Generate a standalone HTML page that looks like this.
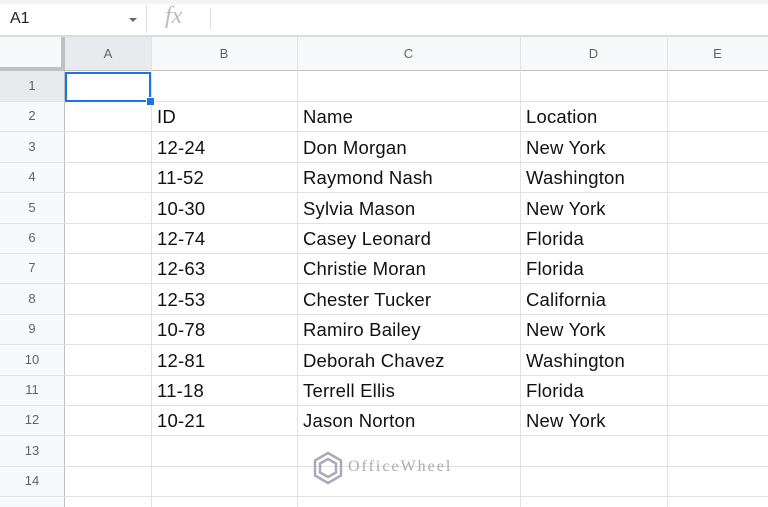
<html style="width:768px;height:507px;overflow:hidden"><head><style>
body{margin:0;width:768px;height:507px;overflow:hidden;background:#fff;font-family:"Liberation Sans",Arial,sans-serif;position:relative}
.a{position:absolute}
.h{background:#f8f9fa;color:#5f6368;font-size:13px;text-align:center;box-sizing:border-box}
.t{font-size:18.5px;letter-spacing:0.2px;color:#111;white-space:nowrap}
</style></head><body>
<div class="a" style="left:0;top:0;width:768px;height:4px;background:#f1f3f4"></div>
<div class="a" style="left:10px;top:10px;font-size:16px;color:#222">A1</div>
<div class="a" style="left:129px;top:18px;width:0;height:0;border-left:4px solid transparent;border-right:4px solid transparent;border-top:4px solid #666"></div>
<div class="a" style="left:146px;top:5px;width:1px;height:28px;background:#e0e0e0"></div>
<div class="a" style="left:165px;top:3px;font-family:'Liberation Serif',serif;font-style:italic;font-size:24px;color:#bbb">fx</div>
<div class="a" style="left:210px;top:8px;width:1px;height:22px;background:#e0e0e0"></div>
<div class="a" style="left:0;top:35px;width:768px;height:2px;background:#dadce0"></div>
<div class="a h" style="left:0;top:37px;width:768px;height:34px"></div>
<div class="a h" style="left:65px;top:37px;width:86px;height:33px;background:#e8eaed;line-height:33px">A</div>
<div class="a h" style="left:151px;top:37px;width:146px;height:33px;line-height:33px">B</div>
<div class="a h" style="left:297px;top:37px;width:223px;height:33px;line-height:33px">C</div>
<div class="a h" style="left:520px;top:37px;width:147px;height:33px;line-height:33px">D</div>
<div class="a h" style="left:667px;top:37px;width:101px;height:33px;line-height:33px">E</div>
<div class="a" style="left:0;top:67px;width:65px;height:4px;background:#c0c0c0"></div>
<div class="a" style="left:61px;top:37px;width:4px;height:34px;background:#c0c0c0"></div>
<div class="a" style="left:65px;top:70px;width:703px;height:1px;background:#c0c0c0"></div>
<div class="a" style="left:0;top:71px;width:64px;height:436px;background:#f8f9fa"></div>
<div class="a" style="left:0;top:71px;width:64px;height:31px;background:#e8eaed"></div>
<div class="a" style="left:64px;top:71px;width:1px;height:436px;background:#c0c0c0"></div>
<div id="g"></div>
<script>
(function(){
var rows=[["","","",""],["","ID","Name","Location"],["","12-24","Don Morgan","New York"],["","11-52","Raymond Nash","Washington"],["","10-30","Sylvia Mason","New York"],["","12-74","Casey Leonard","Florida"],["","12-63","Christie Moran","Florida"],["","12-53","Chester Tucker","California"],["","10-78","Ramiro Bailey","New York"],["","12-81","Deborah Chavez","Washington"],["","11-18","Terrell Ellis","Florida"],["","10-21","Jason Norton","New York"]];
var h='',cx=[151,297,520,667];
cx.forEach(function(x){h+='<div class="a" style="left:'+x+'px;top:37px;width:1px;height:470px;background:#e2e2e2"></div>'});
for(var n=1;n<=15;n++){var y=Math.round(71+30.4*(n-1));
if(y+30<507)h+='<div class="a" style="left:0;top:'+(y+30)+'px;width:768px;height:1px;background:#e2e2e2"></div>';
if(n<15)h+='<div class="a" style="left:0;top:'+y+'px;width:64px;height:30px;line-height:30px;text-align:center;font-size:13px;color:#5f6368">'+n+'</div>';
var r=rows[n-1];if(r){h+='<div class="a t" style="left:157px;top:'+(y+5)+'px">'+r[1]+'</div><div class="a t" style="left:303px;top:'+(y+5)+'px">'+r[2]+'</div><div class="a t" style="left:526px;top:'+(y+5)+'px">'+r[3]+'</div>';}}
document.getElementById('g').innerHTML=h;
})();
</script>
<div class="a" style="left:65px;top:72px;width:86px;height:30px;box-sizing:border-box;border:2px solid #1a73e8"></div>
<div class="a" style="left:146px;top:97px;width:7px;height:7px;background:#1a73e8;border:1px solid #fff"></div>
<svg class="a" style="left:312px;top:451px" width="32" height="34" viewBox="0 0 32 34"><path d="M16 2 L29 9.5 V24.5 L16 32 L3 24.5 V9.5 Z M16 8 L24 12.5 V21.5 L16 26 L8 21.5 V12.5 Z" fill="none" stroke="#aab" stroke-width="2.5"/></svg>
<div class="a" style="left:348px;top:458px;font-family:'Liberation Serif',serif;font-size:16px;letter-spacing:2px;color:#aaa">OfficeWheel</div>
</body></html>
